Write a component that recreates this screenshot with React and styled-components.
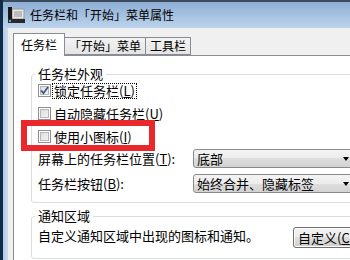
import React from 'react';
import styled, { createGlobalStyle } from 'styled-components';

const GlobalStyle = createGlobalStyle`
  html, body { margin: 0; padding: 0; }
  body {
    width: 350px; height: 260px; overflow: hidden;
    background: #0f2d48;
    font-family: "Noto Sans CJK SC", "Noto Sans", sans-serif;
    color: #000;
  }
  #root { width: 350px; height: 260px; }
`;

const Screen = styled.div`
  display: flex;
  width: 350px;
  height: 260px;
  overflow: hidden;
  box-sizing: border-box;
  padding-left: 3px;
  background: #0f2d48;
`;

const Window = styled.div`
  flex: none;
  width: 400px;
  display: flex;
  flex-direction: column;
`;

const TitleBar = styled.div`
  flex: none;
  height: 26px;
  border-top: 2px solid #3d4c5c;
  background: linear-gradient(#8eaed4, #bcd3ec);
  display: flex;
  align-items: center;
  gap: 5px;
  padding-left: 5px;
  font-size: 12px;
  line-height: 14px;
`;

const Frame = styled.div`
  flex: 1;
  display: flex;
  min-height: 0;
`;

const FrameEdge = styled.div`
  width: 5px;
  background: linear-gradient(90deg, #b6cce4, #cfdded);
`;

const Body = styled.div`
  flex: 1;
  background: #f0f0f0;
  padding: 5px 0 0 5px;
  display: flex;
  flex-direction: column;
`;

const TabRow = styled.div`
  display: flex;
  align-items: flex-end;
  height: 22px;
  position: relative;
  z-index: 1;
`;

const Tab = styled.div`
  box-sizing: border-box;
  height: ${p => (p.$active ? '23px' : '18px')};
  margin-bottom: ${p => (p.$active ? '-1px' : '0')};
  padding: 0 ${p => (p.$active ? '7px' : '4px')};
  border: 1px solid #898c95;
  border-bottom: ${p => (p.$active ? 'none' : '1px solid #898c95')};
  border-left: ${p => (p.$first || p.$active ? '1px solid #898c95' : 'none')};
  background: ${p => (p.$active ? '#fff' : 'linear-gradient(#f3f3f3, #e4e4e4)')};
  font-size: 12px;
  line-height: ${p => (p.$active ? '21px' : '16px')};
  white-space: nowrap;
`;

const Panel = styled.div`
  flex: 1;
  background: #fff;
  border-top: 1px solid #898c95;
  border-left: 1px solid #898c95;
  padding: 18px 0 0 17px;
`;

const Group = styled.div`
  box-sizing: border-box;
  width: 340px;
  border: 1px solid #d5dfe5;
  border-radius: 3px;
  padding: 0 0 ${p => p.$pb || 9}px 6px;
  margin-top: ${p => p.$mt || 0}px;
`;

const Legend = styled.div`
  width: fit-content;
  height: 16px;
  line-height: 16px;
  font-size: 13px;
  background: #fff;
  padding: 0 3px;
  margin: -9px 0 -7px -3px;
`;

const CheckList = styled.div`
  padding-top: 4px;
`;

const CheckRow = styled.div`
  position: relative;
  display: flex;
  align-items: center;
  gap: 1px;
  height: 23px;
  font-size: 13px;
`;

const Box = styled.span`
  flex: none;
  width: 13px;
  height: 13px;
  box-sizing: border-box;
  border: 1px solid #8f8f8f;
  background: linear-gradient(135deg, #d9d9d9, #f7f7f7);
  box-shadow: inset 0 0 0 1px #fff, inset 0 0 0 2px #b4b8bc;
  display: flex;
  align-items: center;
  justify-content: center;
  margin-right: 1px;
`;

const Label = styled.span`
  line-height: 14px;
  padding: 0 1px;
  outline: ${p => (p.$focus ? '1px dotted #000' : 'none')};
  white-space: nowrap;
`;

const Key = styled.span`
  text-decoration: underline;
  text-underline-offset: 1px;
`;

const Highlight = styled.div`
  position: absolute;
  left: -17px;
  top: -5px;
  width: 134px;
  height: 31px;
  box-sizing: border-box;
  border: 6px solid #e8282b;
  pointer-events: none;
`;

const DropRow = styled.div`
  display: grid;
  grid-template-columns: 155px 160px;
  align-items: center;
  height: 19px;
  margin-top: ${p => p.$mt}px;
  font-size: 13px;
  white-space: nowrap;
`;

const Dropdown = styled.div`
  box-sizing: border-box;
  height: 19px;
  border: 1px solid #8a8a8a;
  border-radius: 3px;
  background: linear-gradient(#f4f4f4 0%, #ececec 50%, #dfdfdf 50%, #d2d2d2 100%);
  display: flex;
  align-items: center;
  justify-content: space-between;
  padding: 0 3px 0 3px;
  line-height: 16px;
`;

const Arrow = styled.span`
  width: 0;
  height: 0;
  border-left: 3.5px solid transparent;
  border-right: 3.5px solid transparent;
  border-top: 4px solid #000;
`;

const NotifyRow = styled.div`
  display: flex;
  align-items: center;
  padding: 10px 15px 0 0;
  font-size: 13px;
`;

const NotifyText = styled.span`
  line-height: 16px;
  margin-bottom: 4px;
  white-space: nowrap;
`;

const Button = styled.div`
  margin-left: auto;
  box-sizing: border-box;
  width: 62px;
  height: 21px;
  border: 1px solid #707070;
  border-radius: 3px;
  background: linear-gradient(#f3f3f3 0%, #ebebeb 50%, #dddddd 50%, #cfcfcf 100%);
  box-shadow: inset 0 0 0 1px #fcfcfc;
  padding-left: 4px;
  line-height: 19px;
  white-space: nowrap;
`;

const AppIcon = () => (
  <svg width="17" height="16" viewBox="0 0 17 16">
    <rect x="4" y="2" width="12" height="10" fill="#e6e6e6" stroke="#9a9a9a" />
    <rect x="6" y="4" width="8" height="6" fill="#bdbdbd" />
    <rect x="0" y="0" width="4" height="16" fill="#1a1a1a" />
    <rect x="0" y="12" width="17" height="4" fill="#2a2a2a" />
    <rect x="1" y="13" width="2" height="2" fill="#6a9ad0" />
  </svg>
);

const Check = () => (
  <svg width="9" height="9" viewBox="0 0 9 9">
    <path d="M1 4.5 L3.5 7.2 L8 1" fill="none" stroke="#3f5288" strokeWidth="1.8" />
  </svg>
);

export default function App() {
  return (
    <>
      <GlobalStyle />
      <Screen>
        <Window>
          <TitleBar>
            <AppIcon />
            <span>任务栏和「开始」菜单属性</span>
          </TitleBar>
          <Frame>
            <FrameEdge />
            <Body>
              <TabRow>
                <Tab $active>任务栏</Tab>
                <Tab>「开始」菜单</Tab>
                <Tab>工具栏</Tab>
              </TabRow>
              <Panel>
                <Group $pb={9}>
                  <Legend>任务栏外观</Legend>
                  <CheckList>
                    <CheckRow>
                      <Box><Check /></Box>
                      <Label $focus>锁定任务栏(<Key>L</Key>)</Label>
                    </CheckRow>
                    <CheckRow>
                      <Box />
                      <Label>自动隐藏任务栏(<Key>U</Key>)</Label>
                    </CheckRow>
                    <CheckRow>
                      <Box />
                      <Label>使用小图标(<Key>I</Key>)</Label>
                      <Highlight />
                    </CheckRow>
                  </CheckList>
                  <DropRow $mt={1}>
                    <span>屏幕上的任务栏位置(<Key>T</Key>):</span>
                    <Dropdown>
                      <span>底部</span>
                      <Arrow />
                    </Dropdown>
                  </DropRow>
                  <DropRow $mt={6}>
                    <span>任务栏按钮(<Key>B</Key>):</span>
                    <Dropdown>
                      <span>始终合并、隐藏标签</span>
                      <Arrow />
                    </Dropdown>
                  </DropRow>
                </Group>
                <Group $mt={13} $pb={10}>
                  <Legend>通知区域</Legend>
                  <NotifyRow>
                    <NotifyText>自定义通知区域中出现的图标和通知。</NotifyText>
                    <Button>自定义(<Key>C</Key>)</Button>
                  </NotifyRow>
                </Group>
              </Panel>
            </Body>
          </Frame>
        </Window>
      </Screen>
    </>
  );
}
